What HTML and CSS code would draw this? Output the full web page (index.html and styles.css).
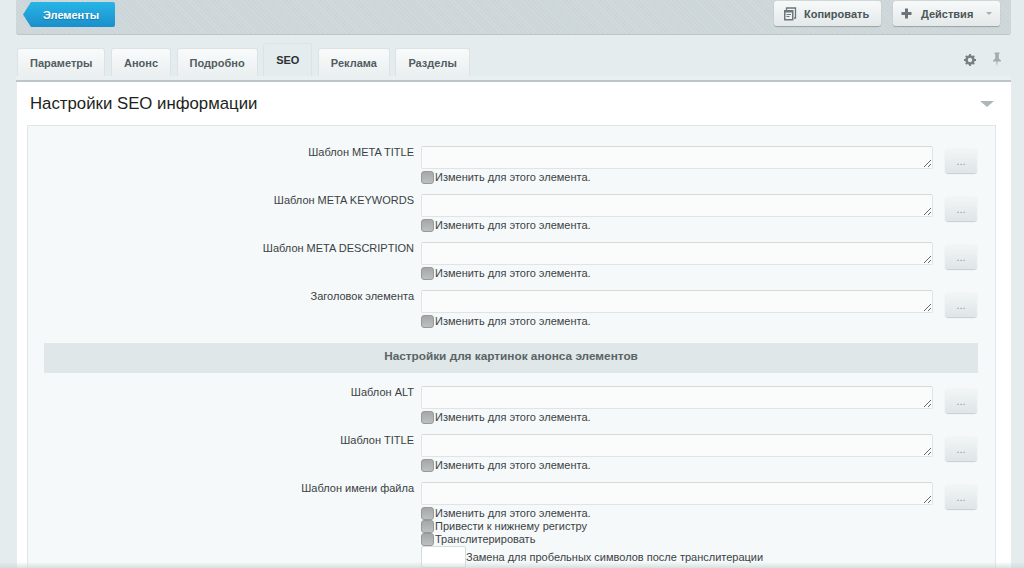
FILE: index.html
```html
<!DOCTYPE html>
<html lang="ru">
<head>
  <meta charset="UTF-8">
  <title>Элементы</title>
  <link rel="stylesheet" href="styles.css">
</head>
<body>
  <div class="toolbar">
    <a class="back-btn">Элементы</a>
    <div class="toolbar-right">
      <a class="btn">
        <svg class="btn-icon" width="14" height="14" viewBox="0 0 14 14"><path d="M3.500 3V1h9v10H11" fill="none" stroke="#6d7678" stroke-width="1.300"/><path d="M1 3h9.500v10.500H1z" fill="#6d7678"/><path d="M2.500 5.500h6.500v6.500H2.500z" fill="#eef1f2"/><path d="M3.500 7.500h4.500M3.500 9.500h3" stroke="#6d7678"/></svg>
        Копировать
      </a>
      <a class="btn btn-actions">
        <svg class="btn-icon" width="11" height="11" viewBox="0 0 11 11"><path d="M4 0.500h3V4h3.500v3H7v3.500H4V7H0.500V4H4z" fill="#6a7375"/></svg>
        Действия
        <span class="caret"></span>
      </a>
    </div>
  </div>

  <div class="tabs-row">
    <div class="tabs">
      <a class="tab">Параметры</a>
      <a class="tab">Анонс</a>
      <a class="tab">Подробно</a>
      <a class="tab tab-active">SEO</a>
      <a class="tab">Реклама</a>
      <a class="tab">Разделы</a>
    </div>
    <div class="tabs-tools">
      <svg width="12" height="12" viewBox="0 0 12 12"><circle cx="6" cy="6" r="3.500" fill="none" stroke="#767f81" stroke-width="2.600"/><path d="M6 0v12M0 6h12M1.800 1.800l8.400 8.400M10.200 1.800l-8.400 8.400" stroke="#767f81" stroke-width="1.800" stroke-dasharray="2 8 2"/></svg>
      <svg width="10" height="15" viewBox="0 0 10 15"><path d="M2.500 0.500h5v1.200l-.7.500v4.300L9 8.500V9.500H5.700L5 14.500 4.300 9.500H1V8.500l2.200-2V2.200l-.7-.5z" fill="#a3acae"/></svg>
    </div>
  </div>
  <div class="tabs-strip"></div>

  <div class="panel">
    <div class="panel-head">
      <h2 class="panel-title">Настройки SEO информации</h2>
      <span class="panel-arrow"></span>
    </div>
    <div class="panel-box">
      <div class="row">
        <label class="row-label">Шаблон META TITLE</label>
        <div class="row-field">
          <textarea></textarea>
          <label class="check"><input type="checkbox">Изменить для этого элемента.</label>
        </div>
        <button class="dots">...</button>
      </div>
      <div class="row">
        <label class="row-label">Шаблон META KEYWORDS</label>
        <div class="row-field">
          <textarea></textarea>
          <label class="check"><input type="checkbox">Изменить для этого элемента.</label>
        </div>
        <button class="dots">...</button>
      </div>
      <div class="row">
        <label class="row-label">Шаблон META DESCRIPTION</label>
        <div class="row-field">
          <textarea></textarea>
          <label class="check"><input type="checkbox">Изменить для этого элемента.</label>
        </div>
        <button class="dots">...</button>
      </div>
      <div class="row">
        <label class="row-label">Заголовок элемента</label>
        <div class="row-field">
          <textarea></textarea>
          <label class="check"><input type="checkbox">Изменить для этого элемента.</label>
        </div>
        <button class="dots">...</button>
      </div>

      <div class="section-head">Настройки для картинок анонса элементов</div>

      <div class="row">
        <label class="row-label">Шаблон ALT</label>
        <div class="row-field">
          <textarea></textarea>
          <label class="check"><input type="checkbox">Изменить для этого элемента.</label>
        </div>
        <button class="dots">...</button>
      </div>
      <div class="row">
        <label class="row-label">Шаблон TITLE</label>
        <div class="row-field">
          <textarea></textarea>
          <label class="check"><input type="checkbox">Изменить для этого элемента.</label>
        </div>
        <button class="dots">...</button>
      </div>
      <div class="row row-last">
        <label class="row-label">Шаблон имени файла</label>
        <div class="row-field">
          <textarea></textarea>
          <label class="check"><input type="checkbox">Изменить для этого элемента.</label>
          <label class="check"><input type="checkbox">Привести к нижнему регистру</label>
          <label class="check"><input type="checkbox">Транслитерировать</label>
          <label class="check check-space"><input class="space-input" type="text">Замена для пробельных символов после транслитерации</label>
        </div>
        <button class="dots">...</button>
      </div>
    </div>
  </div>
  <div class="page-fade"></div>
</body>
</html>
```

FILE: styles.css
```css
html, body {
  height: 100%;
}

body {
  margin: 0;
  padding: 0 13px 0 16px;
  overflow: hidden;
  background: #e5ecee;
  font-family: "Liberation Sans", Arial, sans-serif;
  font-size: 11px;
  color: #3f4b4e;
}

.toolbar {
  display: flex;
  justify-content: space-between;
  height: 35px;
  padding: 1px 11px 0 8px;
  box-sizing: border-box;
  background-color: #ccd5d7;
  background-image: repeating-linear-gradient(45deg, rgba(255,255,255,.12) 0 1px, transparent 1px 3px);
  border-bottom: 1px solid #bcc5c7;
  border-radius: 0 0 3px 3px;
}

.back-btn {
  display: flex;
  align-items: center;
  height: 25px;
  width: 92px;
  margin-top: 1px;
  padding-left: 20px;
  margin-left: -1px;
  box-sizing: border-box;
  background: linear-gradient(#27b5e6, #1b8fcb);
  clip-path: polygon(8px 0, 100% 0, 100% 100%, 8px 100%, 0 50%);
  border-radius: 2px;
  color: #fff;
  font-weight: bold;
  text-shadow: 0 1px 1px rgba(0,0,0,.25);
}

.toolbar-right {
  display: flex;
  gap: 12px;
}

.btn {
  display: flex;
  align-items: center;
  gap: 7px;
  width: 107px;
  height: 25px;
  padding-left: 9px;
  box-sizing: border-box;
  background: linear-gradient(#f8fafa, #e3e8e9);
  border-radius: 3px;
  box-shadow: 0 1px 1px rgba(0,0,0,.25);
  color: #4a5557;
  font-weight: bold;
}

.btn-actions {
  gap: 9px;
  padding-left: 8px;
}

.caret {
  margin-left: 4px;
  border: 3px solid transparent;
  border-top: 3px solid #a8b0b2;
  border-bottom: 0;
}

.tabs-row {
  display: flex;
  justify-content: space-between;
  align-items: center;
  height: 33px;
  margin-top: 8px;
}

.tabs {
  display: flex;
  align-items: flex-end;
  gap: 5.500px;
  height: 100%;
  margin-left: 1px;
}

.tab {
  height: 28px;
  line-height: 28px;
  padding: 0 12px;
  background: linear-gradient(#f9fbfb, #eaeff0);
  border: 1px solid #dce3e5;
  border-bottom: 0;
  border-radius: 3px 3px 0 0;
  box-sizing: border-box;
  color: #525d60;
  font-weight: bold;
}

.tab-active {
  height: 33px;
  line-height: 32px;
  background: #e5ecee;
  color: #2b3234;
}

.tabs-tools {
  display: flex;
  align-items: center;
  gap: 16px;
  margin-right: 9px;
}

.tabs-strip {
  height: 6px;
  box-sizing: border-box;
  background: #eaf0f1;
  border-bottom: 2px solid #bcc5c7;
}

.panel {
  margin-left: 1px;
  padding: 0 15px 0 10px;
  background: #fff;
}

.panel-head {
  display: flex;
  justify-content: space-between;
  align-items: center;
  height: 43px;
  padding: 0 0 0 3px;
}

.panel-title {
  margin: 0;
  font-size: 16.800px;
  font-weight: normal;
  color: #1d1f20;
}

.panel-arrow {
  margin-right: 2px;
  border: 7px solid transparent;
  border-top: 6px solid #adb6b8;
  border-bottom: 0;
}

.panel-box {
  padding: 20px 17px 0 16px;
  background: #f5f9fa;
  border: 1px solid #e0e7e9;
  border-bottom: 0;
}

.row {
  display: grid;
  grid-template-columns: 370px 512px 32px;
  column-gap: 7px;
  align-items: start;
  margin-bottom: 10px;
}

.row-last {
  margin-bottom: 0;
}

.row-label {
  text-align: right;
  color: #3a4143;
}

.row-field {
  display: flex;
  flex-direction: column;
}

.row-field textarea {
  display: block;
  width: 512px;
  height: 23px;
  margin: 0 0 2px;
  padding: 0;
  box-sizing: border-box;
  background: #fafcfb;
  border: 1px solid #dfe5e7;
  border-top-color: #d3dadc;
  border-radius: 2px;
  outline: 0;
  resize: both;
}

.check {
  display: flex;
  align-items: flex-start;
  height: 13px;
  line-height: 12px;
  color: #3c4244;
  white-space: nowrap;
}

.check input[type="checkbox"] {
  appearance: none;
  width: 13px;
  height: 13px;
  margin: 0 1px 0 0;
  background: linear-gradient(#a4a8a9, #bcc0c1);
  border: 1px solid #94999b;
  border-radius: 3px;
  box-sizing: border-box;
}

.check-space {
  align-items: center;
  height: 22px;
}

.space-input {
  flex: none;
  width: 45px;
  height: 22px;
  margin: 0;
  padding: 0;
  box-sizing: border-box;
  background: #fff;
  border: 1px solid #d5dcde;
  border-radius: 2px;
}

.dots {
  width: 32px;
  height: 25px;
  margin: 2px 0 0 5px;
  padding: 0;
  background: linear-gradient(#f2f6f6, #dfe6e8);
  border: 0;
  border-radius: 3px;
  box-shadow: 0 1px 1px rgba(0,0,0,.18);
  color: #8f979a;
  font-family: inherit;
  font-size: 11px;
}

.section-head {
  height: 30px;
  line-height: 26px;
  margin: 15px 0 13px;
  background: #dfe7e8;
  text-align: center;
  font-size: 11.800px;
  font-weight: bold;
  color: #596466;
}

.page-fade {
  position: fixed;
  left: 0;
  right: 0;
  bottom: 0;
  height: 6px;
  background: linear-gradient(rgba(205,215,215,0), rgba(205,215,215,.75));
}
```
